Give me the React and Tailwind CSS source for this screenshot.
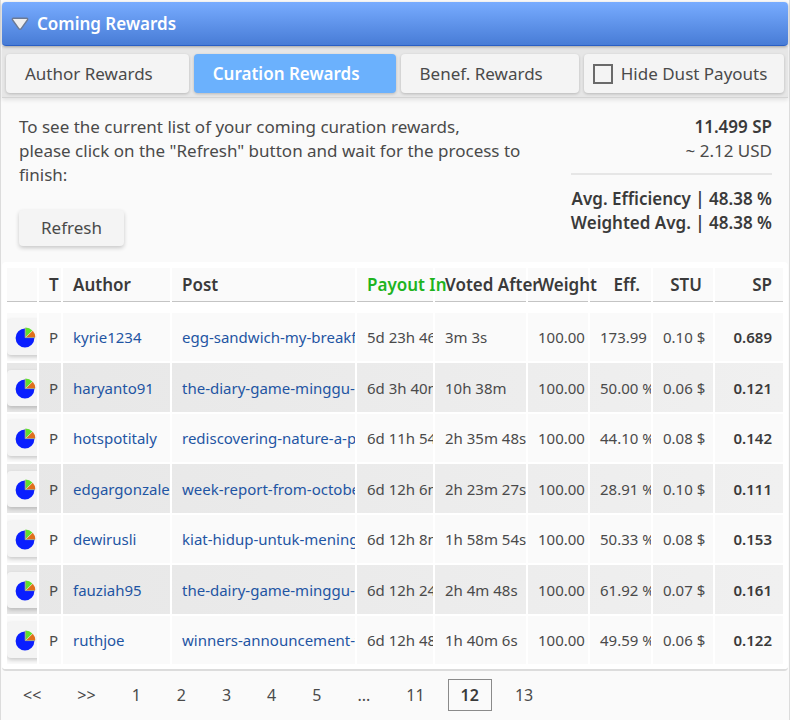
import React, { useState } from "react";

const tabs = ["Author Rewards", "Curation Rewards", "Benef. Rewards"];

const pages = ["<<", ">>", "1", "2", "3", "4", "5", "...", "11", "12", "13"];

const rewards = [
  { author: "kyrie1234", post: "egg-sandwich-my-breakfast", payout: "5d 23h 46m", voted: "3m 3s", eff: "173.99 %", stu: "0.10 $", sp: "0.689" },
  { author: "haryanto91", post: "the-diary-game-minggu-pagi", payout: "6d 3h 40m", voted: "10h 38m", eff: "50.00 %", stu: "0.06 $", sp: "0.121" },
  { author: "hotspotitaly", post: "rediscovering-nature-a-path", payout: "6d 11h 54m", voted: "2h 35m 48s", eff: "44.10 %", stu: "0.08 $", sp: "0.142" },
  { author: "edgargonzalez", post: "week-report-from-october", payout: "6d 12h 6m", voted: "2h 23m 27s", eff: "28.91 %", stu: "0.10 $", sp: "0.111" },
  { author: "dewirusli", post: "kiat-hidup-untuk-meningkat", payout: "6d 12h 8m", voted: "1h 58m 54s", eff: "50.33 %", stu: "0.08 $", sp: "0.153" },
  { author: "fauziah95", post: "the-dairy-game-minggu-pagi", payout: "6d 12h 24m", voted: "2h 4m 48s", eff: "61.92 %", stu: "0.07 $", sp: "0.161" },
  { author: "ruthjoe", post: "winners-announcement-week", payout: "6d 12h 48m", voted: "1h 40m 6s", eff: "49.59 %", stu: "0.06 $", sp: "0.122" },
];

const PieIcon = () => (
  <svg width="22" height="22" viewBox="0 0 22 22" className="block shrink-0" aria-hidden="true">
    <path d="M11 12V2.6a9.4 9.4 0 1 0 9.4 9.4z" fill="#0a1eff" />
    <path d="M11.4 11.2V1.4a9.8 9.8 0 0 1 7 3z" fill="#5fe02c" />
    <path d="M12 11.3l6.8-6.6a9.4 9.4 0 0 1 2.5 6.6z" fill="#e0701c" />
    <path d="M11.2 2v9.6h9.8" fill="none" stroke="#9a9a86" strokeWidth="1" />
  </svg>
);

const ArrowIcon = () => (
  <svg width="18" height="14" viewBox="0 0 18 14" className="shrink-0" aria-hidden="true">
    <path
      d="M2.4 1.2h13.2c1 0 1.4 1 .8 1.8l-6.2 8.6c-.6.8-1.8.8-2.4 0L1.6 3c-.6-.8-.2-1.8.8-1.8z"
      fill="#efefef"
      stroke="#6c7a94"
      strokeWidth="1.4"
    />
  </svg>
);

const RewardRow = ({ reward }) => (
  <tr className="odd:h-12 even:h-[49px] bg-[#fafafa] even:bg-linear-to-r even:from-[#e7e7e7] even:to-[#f0f0f0]">
    <td className="overflow-hidden p-0">
      <button
        type="button"
        aria-label="Show vote chart"
        className="flex h-9 w-12 items-center rounded bg-[#f4f4f4] pl-[7px] shadow-[0_2px_4px_rgba(0,0,0,0.2)]"
      >
        <PieIcon />
      </button>
    </td>
    <td className="overflow-hidden p-0 pl-[10px]">P</td>
    <td className="overflow-hidden p-0 pl-[10px]">
      <a href="#author" className="text-[#1f55a3]">{reward.author}</a>
    </td>
    <td className="overflow-hidden p-0 pl-[10px]">
      <a href="#post" className="text-[#1f55a3]">{reward.post}</a>
    </td>
    <td className="overflow-hidden p-0 pl-[10px]">{reward.payout}</td>
    <td className="overflow-hidden p-0 pl-[10px]">{reward.voted}</td>
    <td className="overflow-hidden p-0 pl-[10px]">100.00 %</td>
    <td className="overflow-hidden p-0 pl-[10px]">{reward.eff}</td>
    <td className="overflow-hidden p-0 pl-[10px]">{reward.stu}</td>
    <td className="overflow-hidden p-0 pr-[11px] text-right font-semibold text-[#3a3a3a]">{reward.sp}</td>
  </tr>
);

const App = () => {
  const [activeTab, setActiveTab] = useState("Curation Rewards");
  const [page, setPage] = useState("12");
  const [hideDust, setHideDust] = useState(false);

  return (
    <div className="min-h-screen border-x border-[#dcdcdc] bg-[#fafafa] px-px pt-[2px] font-['Noto_Sans','Open_Sans',sans-serif] text-[17px] leading-6 text-[#4a4a4a]">
      {/* Section header */}
      <h1 className="relative">
        <button
          type="button"
          aria-expanded="true"
          className="flex h-11 w-full items-center gap-2 rounded border-b border-[#2a5fc4] bg-linear-to-b from-[#78acff] to-[#487cd6] pl-[9px] font-semibold text-white shadow-[0_1px_3px_rgba(0,0,0,0.3)]"
        >
          <ArrowIcon />
          Coming Rewards
        </button>
      </h1>

      {/* Tabs */}
      <div className="flex gap-[5px] border-b border-[#d4d4d4] bg-[#e6e6e6] px-1 pt-2 pb-1 shadow-[0_2px_4px_rgba(0,0,0,0.1)]">
        {tabs.map((tab) => (
          <button
            key={tab}
            type="button"
            onClick={() => setActiveTab(tab)}
            className={`h-[39px] whitespace-nowrap rounded pr-9 pl-[19px] shadow-[0_1px_3px_rgba(0,0,0,0.2)] ${
              activeTab === tab ? "bg-[#6bb1fd] font-semibold text-white" : "bg-[#f4f4f4]"
            }`}
          >
            {tab}
          </button>
        ))}
        <label className="flex h-[39px] flex-1 items-center gap-2 whitespace-nowrap rounded bg-[#f4f4f4] pl-[9px] shadow-[0_1px_3px_rgba(0,0,0,0.2)]">
          <input
            type="checkbox"
            checked={hideDust}
            onChange={(e) => setHideDust(e.target.checked)}
            className="size-5 shrink-0 appearance-none border-2 border-[#6a6a6a] checked:bg-[#6a6a6a]"
          />
          Hide Dust Payouts
        </label>
      </div>

      {/* Summary */}
      <div className="flex items-start justify-between px-4 pt-[17px] pb-4">
        <div className="pl-px">
          <p>
            To see the current list of your coming curation rewards,
            <br />
            please click on the "Refresh" button and wait for the process to
            <br />
            finish:
          </p>
          <button
            type="button"
            className="mt-[23px] h-9 rounded bg-[#f4f4f4] px-[22px] shadow-[0_2px_4px_rgba(0,0,0,0.2)]"
          >
            Refresh
          </button>
        </div>
        <div className="shrink-0 text-right">
          <p className="font-semibold text-[#3a3a3a]">11.499 SP</p>
          <p>~ 2.12 USD</p>
          <div className="mt-[10px] border-t-2 border-[#e6e6e6] pt-3 font-semibold text-[#3a3a3a]">
            <p>Avg. Efficiency | 48.38 %</p>
            <p>Weighted Avg. | 48.38 %</p>
          </div>
        </div>
      </div>

      {/* Rewards list */}
      <div className="rounded border-b-2 border-[#dcdcdc] bg-white px-[3px] pt-1 pb-[3px]">
        <table className="w-full table-fixed border-separate border-spacing-[2px] whitespace-nowrap">
          <colgroup>
            <col className="w-[30px]" />
            <col className="w-[22px]" />
            <col className="w-[107px]" />
            <col />
            <col className="w-[76px]" />
            <col className="w-[91px]" />
            <col className="w-[60px]" />
            <col className="w-[61px]" />
            <col className="w-[60px]" />
            <col className="w-[68px]" />
          </colgroup>
          <thead>
            <tr className="h-[34px] bg-[#fafafa] text-left text-[#3a3a3a] *:border-b *:border-[#c4c4c4] *:p-0 *:font-semibold">
              <td></td>
              <th scope="col"><span className="pl-[10px]">T</span></th>
              <th scope="col"><span className="pl-[10px]">Author</span></th>
              <th scope="col"><span className="pl-[10px]">Post</span></th>
              <th scope="col" className="text-[#1fb41f]"><span className="pl-[10px]">Payout In</span></th>
              <th scope="col"><span className="pl-[10px]">Voted After</span></th>
              <th scope="col"><span className="pl-[10px]">Weight</span></th>
              <th scope="col" className="text-right"><span className="pr-[11px]">Eff.</span></th>
              <th scope="col" className="text-right"><span className="pr-[11px]">STU</span></th>
              <th scope="col" className="text-right"><span className="pr-[11px]">SP</span></th>
            </tr>
          </thead>
          <tbody className="text-[15px] before:block before:h-[7px] before:content-['']">
            {rewards.map((reward) => (
              <RewardRow key={reward.author} reward={reward} />
            ))}
          </tbody>
        </table>
      </div>

      {/* Pagination */}
      <nav aria-label="Pages" className="flex gap-[10px] px-2 pt-2 pb-[8px] text-base">
        {pages.map((item) => (
          <button
            key={item}
            type="button"
            onClick={() => setPage(item)}
            className={`h-8 border px-3 ${
              page === item ? "border-[#8a8a8a] font-semibold text-[#3a3a3a]" : "border-transparent"
            }`}
          >
            {item}
          </button>
        ))}
      </nav>
    </div>
  );
};

export default App;
